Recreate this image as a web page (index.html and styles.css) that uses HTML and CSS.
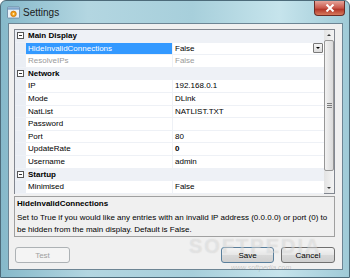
FILE: index.html
```html
<!DOCTYPE html>
<html>
  <head>
    <meta charset="utf-8">
    <title>Settings</title>
    <link rel="stylesheet" href="styles.css">
  </head>
  <body>
    <div class="window">
      <div class="titlebar">
        <svg class="app-icon" width="13" height="13" viewBox="0 0 14 13">
          <rect x="0.5" y="0.5" width="13" height="12" rx="1" fill="#e9f1f8" stroke="#6d8aa6"/>
          <rect x="1" y="1" width="12" height="2.5" fill="#7fa6cc"/>
          <circle cx="7" cy="8" r="3" fill="#f3a21b" stroke="#c86e08" stroke-width="0.8"/>
          <circle cx="7" cy="8" r="1" fill="#fff3c8"/>
        </svg>
        <span class="title">Settings</span>
        <div class="close">
          <svg width="10" height="8" viewBox="0 0 10 8">
            <path d="M1.5 0.5 L8.5 7.5 M8.5 0.5 L1.5 7.5" stroke="#fff" stroke-width="2"/>
          </svg>
        </div>
      </div>

      <div class="client">
        <div class="grid">
          <div class="rows">
            <div class="row cat"><span class="gutter"><i class="minus"></i></span><span class="name">Main Display</span></div>
            <div class="row selected"><span class="gutter"></span><span class="name">HideInvalidConnections</span><span class="value">False<span class="drop"></span></span></div>
            <div class="row disabled"><span class="gutter"></span><span class="name">ResolveIPs</span><span class="value">False</span></div>
            <div class="row cat"><span class="gutter"><i class="minus"></i></span><span class="name">Network</span></div>
            <div class="row"><span class="gutter"></span><span class="name">IP</span><span class="value">192.168.0.1</span></div>
            <div class="row"><span class="gutter"></span><span class="name">Mode</span><span class="value">DLink</span></div>
            <div class="row"><span class="gutter"></span><span class="name">NatList</span><span class="value">NATLIST.TXT</span></div>
            <div class="row"><span class="gutter"></span><span class="name">Password</span><span class="value"></span></div>
            <div class="row"><span class="gutter"></span><span class="name">Port</span><span class="value">80</span></div>
            <div class="row"><span class="gutter"></span><span class="name">UpdateRate</span><span class="value bold">0</span></div>
            <div class="row"><span class="gutter"></span><span class="name">Username</span><span class="value">admin</span></div>
            <div class="row cat"><span class="gutter"><i class="minus"></i></span><span class="name">Startup</span></div>
            <div class="row"><span class="gutter"></span><span class="name">Minimised</span><span class="value">False</span></div>
          </div>
          <div class="scrollbar">
            <div class="arrow up"></div>
            <div class="thumb"><i class="grip"></i></div>
            <div class="track"></div>
            <div class="arrow down"></div>
          </div>
        </div>

        <div class="desc">
          <div class="desc-title">HideInvalidConnections</div>
          <div class="desc-text">Set to True if you would like any entries with an invalid IP address (0.0.0.0) or port (0) to be hidden from the main display. Default is False.</div>
        </div>

        <div class="buttons">
          <span class="button disabled">Test</span>
          <span class="spacer"></span>
          <span class="button default">Save</span>
          <span class="button">Cancel</span>
        </div>
      </div>

      <div class="watermark">SOFTPEDIA</div>
      <div class="watermark-url">www.softpedia.com</div>
    </div>
  </body>
</html>
```

FILE: styles.css
```css
html, body {
  margin: 0;
  padding: 0;
  width: 350px;
  height: 278px;
  overflow: hidden;
}

body {
  font-family: "Liberation Sans", Arial, sans-serif;
  font-size: 8px;
  color: #000;
}

.window {
  position: relative;
  box-sizing: border-box;
  width: 350px;
  height: 278px;
  border: 1px solid #4d6b7a;
  border-radius: 6px 6px 0 0;
  background: linear-gradient(to right, #86b9ca 0%, #b3d6e1 25%, #a7cfdb 55%, #c6e4ec 80%, #9fcad7 100%);
  display: flex;
  flex-direction: column;
}

.titlebar {
  height: 22px;
  display: flex;
  align-items: center;
  padding-left: 6px;
}

.app-icon {
  margin-right: 3px;
}

.title {
  font-size: 10px;
  color: #1a1a1a;
}

.close {
  margin-left: auto;
  margin-right: 4px;
  align-self: flex-start;
  width: 31px;
  height: 15px;
  box-sizing: border-box;
  border: 1px solid #6b2c26;
  border-top: none;
  border-radius: 0 0 4px 4px;
  background: linear-gradient(to bottom, #e6a49a, #c9574a 50%, #b3382a 60%, #d77a5d);
  display: flex;
  align-items: center;
  justify-content: center;
}

.client {
  flex: 1;
  margin: 0 6px 7px 7px;
  border: 1px solid #6d8594;
  background: #f0f0f0;
  padding: 5px 7px 0 5px;
  display: flex;
  flex-direction: column;
}

/* property grid */
.grid {
  height: 165px;
  box-sizing: border-box;
  border: 1px solid #828790;
  background: #fff;
  display: flex;
}

.rows {
  flex: 1;
  display: flex;
  flex-direction: column;
}

.row {
  height: 12.6px;
  display: flex;
  box-sizing: border-box;
  border-bottom: 1px solid #eef1f6;
  line-height: 11.6px;
}

.row .gutter {
  width: 11px;
  flex: none;
  background: #eaeef4;
  display: flex;
  align-items: center;
  justify-content: center;
}

.row .name {
  width: 144px;
  flex: none;
  padding-left: 2px;
  border-right: 1px solid #eef1f6;
  white-space: nowrap;
  overflow: hidden;
}

.row .value {
  flex: 1;
  padding-left: 2px;
  display: flex;
  align-items: center;
}

.row .value.bold {
  font-weight: bold;
}

.row.cat {
  background: #eef1f6;
  font-weight: bold;
}

.row.cat .name {
  border-right: none;
}

.minus {
  width: 7px;
  height: 7px;
  box-sizing: border-box;
  border: 1px solid #555;
  background: #fff linear-gradient(#333, #333) center / 3px 1px no-repeat;
}

.row.selected .name {
  background: #3399ff;
  color: #fff;
}

.row.disabled {
  color: #9a9a9a;
}

.drop {
  margin-left: auto;
  margin-right: 1px;
  width: 10px;
  height: 10px;
  box-sizing: border-box;
  border: 1px solid #7a7a7a;
  border-radius: 1px;
  background: linear-gradient(#f6f6f6, #dcdcdc);
  position: relative;
}

.drop::after {
  content: "";
  position: absolute;
  left: 2px;
  top: 3px;
  border-left: 2px solid transparent;
  border-right: 2px solid transparent;
  border-top: 2px solid #000;
  width: 0;
}

.scrollbar {
  width: 10px;
  flex: none;
  background: linear-gradient(to right, #e3e3e3, #f4f4f4);
  display: flex;
  flex-direction: column;
}

.arrow {
  height: 10px;
  display: flex;
  align-items: center;
  justify-content: center;
}

.arrow::after {
  content: "";
  border-left: 2px solid transparent;
  border-right: 2px solid transparent;
}

.arrow.up::after {
  border-bottom: 2px solid #3a3a3a;
}

.arrow.down::after {
  border-top: 2px solid #3a3a3a;
}

.thumb {
  height: 131px;
  box-sizing: border-box;
  border: 1px solid #979797;
  border-radius: 2px;
  background: linear-gradient(to right, #f2f2f2, #dadada);
  display: flex;
  align-items: center;
  justify-content: center;
}

.grip {
  width: 5px;
  height: 5px;
  background: repeating-linear-gradient(to bottom, #7d7d7d 0 1px, transparent 1px 2px);
}

.track {
  flex: 1;
}

/* description pane */
.desc {
  margin-top: 2px;
  height: 41px;
  box-sizing: border-box;
  border: 1px solid #a0a0a0;
  padding: 1px 2px;
}

.desc-title {
  font-weight: bold;
  line-height: 12px;
}

.desc-text {
  margin-top: 2px;
  line-height: 11.5px;
}

/* buttons */
.buttons {
  margin-top: 10px;
  display: flex;
  gap: 7px;
  padding-left: 1px;
}

.spacer {
  flex: 1;
}

.button {
  width: 54px;
  height: 16px;
  box-sizing: border-box;
  border: 1px solid #707070;
  border-radius: 3px;
  background: linear-gradient(to bottom, #f4f4f4 0%, #e6e6e6 50%, #d9d9d9 51%, #cfcfcf 100%);
  display: flex;
  align-items: center;
  justify-content: center;
}

.button.disabled {
  width: 55px;
  border-color: #adb2b5;
  background: #f4f4f4;
  color: #a0a0a0;
}

.button.default {
  width: 53px;
  border-color: #5a7f9c;
}

.watermark {
  position: absolute;
  left: 188px;
  top: 237px;
  font-size: 20px;
  line-height: 16px;
  font-weight: bold;
  letter-spacing: 2px;
  color: rgba(255, 255, 255, 0.35);
  text-shadow: 0 0 1px rgba(120, 120, 120, 0.25);
}

.watermark-url {
  position: absolute;
  left: 230px;
  top: 263px;
  font-size: 7px;
  line-height: 8px;
  font-style: italic;
  color: rgba(120, 120, 120, 0.35);
}
```
